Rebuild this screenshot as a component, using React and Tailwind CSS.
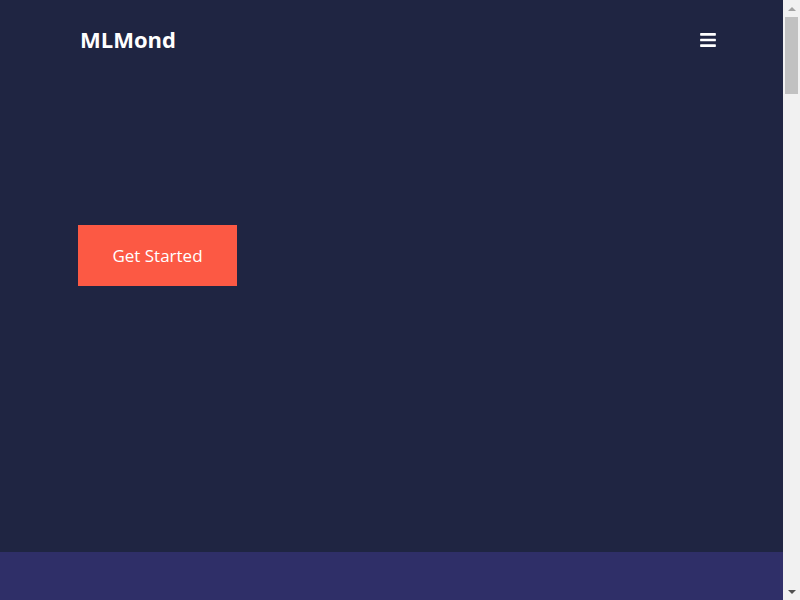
import { FaBars } from 'react-icons/fa';

function Scrollbar() {
  return (
    <div className="flex h-screen w-[17px] shrink-0 flex-col items-center bg-[#f1f1f1]">
      <div className="flex h-[17px] w-full items-center justify-center">
        <span className="h-0 w-0 border-x-[4px] border-b-[4px] border-x-transparent border-b-[#a3a3a3]" />
      </div>
      <div className="h-[77px] w-[13px] bg-[#c1c1c1]" />
      <div className="flex-1" />
      <div className="flex h-[17px] w-full items-center justify-center">
        <span className="h-0 w-0 border-x-[4px] border-t-[4px] border-x-transparent border-t-[#505050]" />
      </div>
    </div>
  );
}

export default function App() {
  return (
    <div className="flex h-screen overflow-hidden bg-[#1f2542] font-['Open_Sans',sans-serif] text-white">
      <main className="flex-1 overflow-hidden">
        {/* Hero */}
        <section className="h-[552px] bg-[#1f2542]">
          <header className="flex h-[79px] items-center justify-between pl-20 pr-[67px]">
            <span className="text-[22px] font-bold">MLMond</span>
            <button className="text-white">
              <FaBars className="h-[18px] w-4" />
            </button>
          </header>
          <div className="pl-[78px] pt-[146px]">
            <button className="h-[61px] w-[159px] bg-[#fc5944] text-[17px] font-medium text-white">
              Get Started
            </button>
          </div>
        </section>

        {/* Next section */}
        <section className="h-[3850px] bg-[#2f2f68]" />
      </main>
      <Scrollbar />
    </div>
  );
}
